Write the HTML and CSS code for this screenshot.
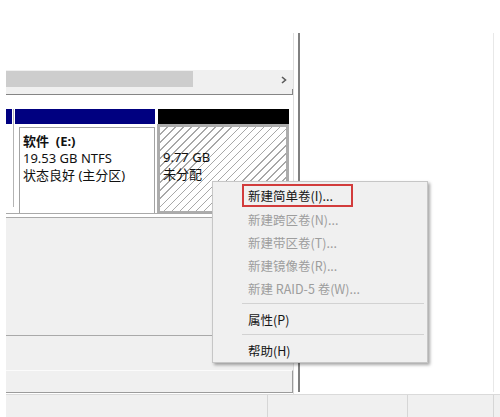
FILE: index.html
```html
<!DOCTYPE html>
<html lang="zh-CN">
<head>
<meta charset="utf-8">
<title>磁盘管理</title>
<link rel="stylesheet" href="styles.css">
</head>
<body>
<div class="app">
  <div class="top"></div>
  <div class="main">
    <div class="gutter"></div>
    <div class="left">
      <div class="blank"></div>
      <div class="hscroll">
        <div class="thumb"></div>
        <div class="fill"></div>
        <svg class="arrow" width="6" height="8" viewBox="0 0 6 8"><polyline points="1,1 4.5,4 1,7" fill="none" stroke="#5a5a5a" stroke-width="1.6"/></svg>
        <div class="tick"></div>
      </div>
      <div class="gap"></div>
      <div class="disk">
        <div class="label-col">
          <div class="hdr blue"></div>
        </div>
        <div class="part p1">
          <div class="hdr blue"></div>
          <div class="box">
            <div class="name">软件 &nbsp;(E:)</div>
            <div>19.53 GB NTFS</div>
            <div>状态良好 (主分区)</div>
          </div>
        </div>
        <div class="part p2">
          <div class="hdr black"></div>
          <div class="box hatch">
            <div>&nbsp;</div>
            <div>9.77 GB</div>
            <div>未分配</div>
          </div>
        </div>
      </div>
      <div class="gap2"></div>
      <div class="disk-empty"></div>
      <div class="row3"></div>
      <div class="row4"></div>
    </div>
    <div class="spacer"></div>
    <div class="splitter"></div>
    <div class="right"></div>
  </div>
  <div class="status">
    <div class="cell c1"></div>
    <div class="cell c2"></div>
    <div class="cell c3"></div>
    <div class="cell c4"></div>
  </div>

  <div class="menu">
    <div class="item"><span class="txt marked">新建简单卷(I)...</span></div>
    <div class="item off"><span class="txt">新建跨区卷(N)...</span></div>
    <div class="item off"><span class="txt">新建带区卷(T)...</span></div>
    <div class="item off"><span class="txt">新建镜像卷(R)...</span></div>
    <div class="item off"><span class="txt">新建 RAID-5 卷(W)...</span></div>
    <div class="sep"></div>
    <div class="item"><span class="txt">属性(P)</span></div>
    <div class="sep"></div>
    <div class="item"><span class="txt">帮助(H)</span></div>
  </div>
</div>
</body>
</html>
```

FILE: styles.css
```css
* { box-sizing: border-box; }
html, body { margin: 0; padding: 0; }
body {
  width: 500px;
  height: 417px;
  overflow: hidden;
  background: #fff;
  font-family: "Noto Sans", "Noto Sans CJK SC", sans-serif;
  color: #111;
}
.app {
  position: relative;
  width: 500px;
  height: 417px;
  display: flex;
  flex-direction: column;
}
.top { height: 33px; flex: none; }
.main {
  height: 361px;
  flex: none;
  display: flex;
}
.gutter { width: 6px; flex: none; }
.left {
  width: 288px;
  flex: none;
  border-right: 1px solid #dedede;
  display: flex;
  flex-direction: column;
}
.blank { height: 37px; flex: none; }
.hscroll {
  height: 25px;
  flex: none;
  background: #f0f0f0;
  border-bottom: 1px solid #858585;
  display: flex;
  align-items: flex-start;
}
.thumb {
  width: 187px;
  height: 16px;
  margin-top: 1px;
  background: #cdcdcd;
}
.fill { flex: 1; }
.arrow { align-self: center; margin-right: 5px; margin-top: -4px; }
.tick {
  align-self: flex-end;
  width: 1px;
  height: 5px;
  background: #858585;
}
.gap { height: 14px; flex: none; }
.disk {
  height: 105px;
  flex: none;
  display: flex;
  border-bottom: 1px solid #a9a9a9;
  background: #fff;
}
.hdr { height: 15px; }
.blue { background: #000080; }
.black { background: #000; }
.label-col {
  width: 8px;
  border-right: 1px solid #b4b4b4;
  margin-bottom: 6px;
}
.label-col .hdr { margin-right: 1px; }
.part { display: flex; flex-direction: column; }
.p1 { width: 142px; }
.p1 .hdr { margin: 0 1px 0 1px; }
.p1 .box {
  flex: 1;
  margin: 3px 1px 0 5px;
  border: 1px solid #a3a3a3;
  border-bottom: none;
}
.p2 { width: 133px; }
.p2 .hdr { margin-left: 2px; }
.p2 .box {
  flex: 1;
  margin-left: 1px;
  border: 3px solid #acacac;
  border-bottom-width: 2px;
}
.box {
  padding: 5px 3px 0 3px;
  font-size: 13px;
  line-height: 17px;
  white-space: nowrap;
  color: #111;
}
.name { font-weight: bold; }
.hatch {
  background: repeating-linear-gradient(135deg, #fff 0, #fff 4.6px, #a8a8a8 4.6px, #a8a8a8 5.7px);
}
.gap2 { height: 3px; flex: none; }
.disk-empty {
  height: 119px;
  flex: none;
  background: #f0f0f0;
  border-top: 1px solid #a9a9a9;
  border-bottom: 1px solid #a9a9a9;
}
.row3 { height: 34px; flex: none; background: #f0f0f0; }
.row4 {
  height: 23px;
  flex: none;
  background: #f0f0f0;
  border-top: 1px solid #fbfbfb;
  border-bottom: 1px solid #9b9b9b;
  border-right: 1px solid #9b9b9b;
}
.spacer { width: 4px; flex: none; }
.splitter {
  width: 2px;
  flex: none;
  background: #808080;
  margin-bottom: 2px;
}
.right {
  flex: 1;
  margin-right: 6px;
  margin-bottom: 2px;
  border-right: 1px solid #e8e8e8;
}
.status {
  height: 23px;
  flex: none;
  margin-left: 6px;
  display: flex;
  background: #f0f0f0;
  border-top: 1px solid #dadada;
}
.cell { border-right: 1px solid #d6d6d6; }
.c1 { width: 262px; }
.c2 { width: 140px; }
.c3 { width: 86px; }
.c4 { flex: 1; border-right: none; }

.menu {
  position: absolute;
  left: 212px;
  top: 181px;
  width: 216px;
  height: 182px;
  background: #f0f0f0;
  border: 1px solid #c6c6c6;
  box-shadow: 2px 2px 3px rgba(0, 0, 0, 0.35);
  padding: 3px 0 0 0;
  font-family: "Noto Sans CJK SC", sans-serif;
  font-size: 12.5px;
}
.item {
  height: 23px;
  padding-left: 29px;
  display: flex;
  align-items: stretch;
}
.txt {
  display: inline-flex;
  align-items: center;
  height: 23px;
  padding: 0 4px;
  border: 2px solid transparent;
  color: #151515;
  white-space: nowrap;
}
.off .txt { color: #9d9d9d; }
.txt.marked {
  width: 111px;
  border-color: #d23c3c;
  margin-top: -1px;
}
.sep {
  height: 1px;
  background: #d2d2d2;
  margin: 3px 3px 4px 29px;
}
```
